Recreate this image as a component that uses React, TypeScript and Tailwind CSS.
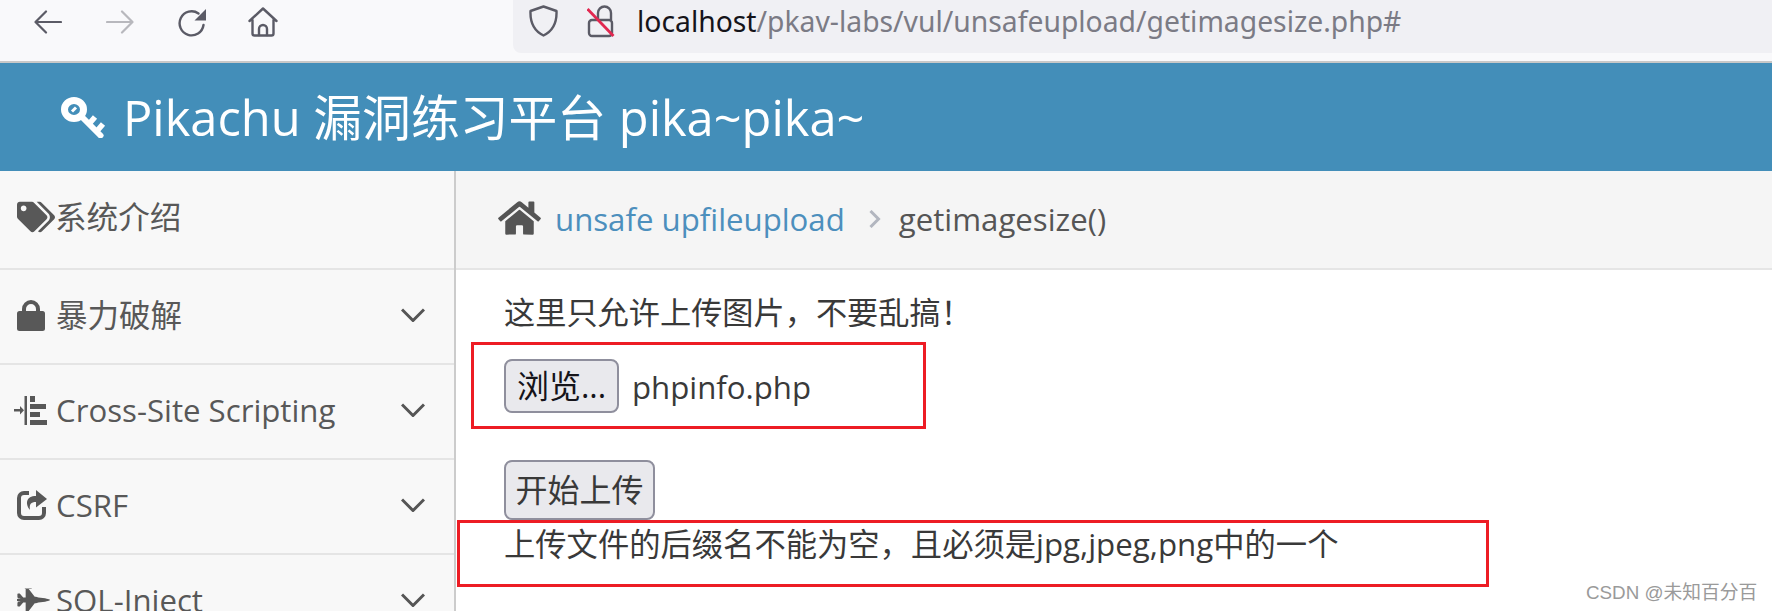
import { FaFighterJet, FaHome, FaTags } from "react-icons/fa";

const SANS = "font-['Open_Sans','Noto_Sans_CJK_SC',sans-serif]";
const BROWSER_GRAY = "#5b5b66";

function BackArrow({ color }: { color: string }) {
  return (
    <svg viewBox="0 0 28 24" className="w-[28px] h-[24px] shrink-0" fill="none" stroke={color} strokeWidth="2.2" strokeLinecap="round" strokeLinejoin="round">
      <path d="M27 12H2M12 1.5L1.5 12 12 22.5" />
    </svg>
  );
}

function ReloadIcon() {
  return (
    <svg viewBox="0 0 28 28" className="w-[28px] h-[28px] shrink-0" fill="none">
      <path d="M20.5 4.5A12 12 0 1 0 25.5 16" stroke={BROWSER_GRAY} strokeWidth="2.4" strokeLinecap="round" />
      <path d="M28 0v11.5H16.5z" fill={BROWSER_GRAY} />
    </svg>
  );
}

function HomeOutline() {
  return (
    <svg viewBox="0 0 30 30" className="w-[30px] h-[30px] shrink-0" fill="none" stroke={BROWSER_GRAY} strokeWidth="2.4" strokeLinejoin="round" strokeLinecap="round">
      <path d="M1.5 14L15 1.5 28.500 14M4.500 13v13.500a2 2 0 0 0 2 2h17a2 2 0 0 0 2-2V13" />
      <path d="M11 28v-6a4 4 0 0 1 8 0v6" />
    </svg>
  );
}

function ShieldIcon() {
  return (
    <svg viewBox="0 0 29 32" className="w-[29px] h-[32px] shrink-0" fill="none" stroke={BROWSER_GRAY} strokeWidth="2.4" strokeLinejoin="round">
      <path d="M14.500 1.500L27.500 6C28 18 24 26 14.500 30.500 5 26 1 18 1.500 6z" />
    </svg>
  );
}

function LockSlash() {
  return (
    <svg viewBox="0 0 28 33" className="w-[28px] h-[33px] shrink-0" fill="none" strokeWidth="2.4">
      <path d="M11 15V8a6.500 6.500 0 0 1 13 0v7" stroke={BROWSER_GRAY} />
      <rect x="2" y="15" width="23" height="16" rx="3" stroke={BROWSER_GRAY} />
      <path d="M0.500 4l26 27" stroke="#e22850" strokeWidth="2.800" />
    </svg>
  );
}

function KeyIcon() {
  return (
    <svg viewBox="0 0 46 41" className="w-[46px] h-[41px] shrink-0" fill="none" stroke="#fff">
      <ellipse cx="14" cy="12.500" rx="9.500" ry="9" strokeWidth="7" />
      <path d="M12 14.500l4-4" strokeWidth="3" stroke="#fff" />
      <path d="M21 19l19.500 19.500" strokeWidth="6" strokeLinecap="round" />
      <path d="M29 27l6-7M37 34l6-7" strokeWidth="5.500" />
    </svg>
  );
}

function LockIcon() {
  return (
    <svg viewBox="0 0 28 31" className="w-[28px] h-[31px] shrink-0" fill="#585858">
      <rect x="0" y="11" width="28" height="20" rx="2.500" />
      <path d="M7 12V9a7 7 0 0 1 14 0v3" fill="none" stroke="#585858" strokeWidth="4" />
    </svg>
  );
}

function IndentIcon() {
  return (
    <svg viewBox="0 0 33 29" className="w-[33px] h-[29px] shrink-0 ml-[-3px]" fill="#585858">
      <rect x="0" y="13" width="7" height="2.500" />
      <path d="M6 10l4 4.250-4 4.250z" />
      <rect x="10.500" y="0" width="2.500" height="29" />
      <rect x="16" y="0" width="5" height="6" />
      <rect x="16" y="8" width="16" height="5" />
      <rect x="16" y="16" width="10" height="5" />
      <rect x="16" y="24" width="17" height="5" />
    </svg>
  );
}

function ShareIcon() {
  return (
    <svg viewBox="0 0 30 30" className="w-[30px] h-[30px] shrink-0" fill="#585858">
      <path d="M12 3H7a5 5 0 0 0-5 5v15a5 5 0 0 0 5 5h15a5 5 0 0 0 5-5v-6" fill="none" stroke="#585858" strokeWidth="4" />
      <path d="M19 0l11 9-11 8.500V12c-5 0-7 2-6 8-5-6-4-14 6-14z" />
    </svg>
  );
}

function ChevronDown() {
  return (
    <svg viewBox="0 0 24 14" className="w-[24px] h-[14px] shrink-0" fill="none" stroke="#555" strokeWidth="3">
      <path d="M1 1.500l11 11 11-11" />
    </svg>
  );
}

const NAV = [
  { label: "暴力破解", size: "text-[31.5px]", icon: <LockIcon /> },
  { label: "Cross-Site Scripting", size: "text-[31.2px]", icon: <IndentIcon /> },
  { label: "CSRF", size: "text-[31.2px]", icon: <ShareIcon /> },
  { label: "SQL-Inject", size: "text-[31.2px]", icon: <FaFighterJet className="w-[33px] h-[30px] shrink-0" /> },
];

export default function App() {
  return (
    <div className={`relative h-[611px] overflow-hidden bg-white ${SANS}`}>
      {/* browser toolbar */}
      <div className="flex h-[63px] bg-[#f9f9fb] border-b-2 border-[#c8c8c8]">
        <div className="flex items-start w-[513px] pl-[34px]">
          <div className="mt-[10px]"><BackArrow color={BROWSER_GRAY} /></div>
          <div className="mt-[10px] ml-[44px] scale-x-[-1]"><BackArrow color="#b8b8bd" /></div>
          <div className="mt-[9px] ml-[44px]"><ReloadIcon /></div>
          <div className="mt-[7px] ml-[42px]"><HomeOutline /></div>
        </div>
        <div className="flex-1 h-[53px] bg-[#f0f0f4] rounded-bl-lg flex items-start pt-[5px] pl-[16px]">
          <ShieldIcon />
          <div className="ml-[29px]">
            <LockSlash />
          </div>
          <div className="ml-[22px] mt-[-2px] text-[28.3px] leading-[36px] text-[#7b7b85] font-['Noto_Sans',sans-serif] whitespace-nowrap">
            <span className="text-[#15141a]">localhost</span>/pkav-labs/vul/unsafeupload/getimagesize.php#
          </div>
        </div>
      </div>

      {/* app header */}
      <div className="flex items-center h-[108px] bg-[#438eb9] text-white pl-[60px]">
        <KeyIcon />
        <span className="ml-[17px] text-[48.8px] leading-none whitespace-nowrap">Pikachu 漏洞练习平台 pika~pika~</span>
      </div>

      <div className="flex">
        {/* sidebar */}
        <div className="w-[456px] shrink-0 bg-[#f8f8f8] border-r-2 border-[#cccccc] text-[#585858] h-[440px]">
          <div className="flex items-center h-[99px] pl-[17px] pb-[6px] border-b-2 border-[#e5e5e5]">
            <FaTags className="w-[38px] h-[32px] shrink-0" />
            <span className="text-[31.6px] leading-[44px]">系统介绍</span>
          </div>
          {NAV.map((item) => (
            <div key={item.label} className="flex items-center h-[95px] pl-[17px] pr-[29px] pb-[3px] border-b-2 border-[#e5e5e5]">
              <div className="w-[39px] shrink-0 flex items-center">{item.icon}</div>
              <span className={`flex-1 leading-[44px] whitespace-nowrap ${item.size}`}>{item.label}</span>
              <ChevronDown />
            </div>
          ))}
        </div>

        {/* content */}
        <div className="flex-1">
          <div className="flex items-center h-[99px] pl-[42px] pb-[1px] bg-[#f5f5f5] border-b-2 border-[#e5e5e5]">
            <FaHome className="w-[43px] h-[38px] mb-[2px] text-[#555555]" />
            <a href="#" className="ml-[14px] text-[31.2px] text-[#4c8fbd] whitespace-nowrap">unsafe upfileupload</a>
            <svg viewBox="0 0 12 18" className="ml-[24px] w-[12px] h-[18px]" fill="none" stroke="#b2b6bf" strokeWidth="3">
              <path d="M1.500 1l8 8-8 8" />
            </svg>
            <span className="ml-[18px] text-[31.2px] text-[#555555] whitespace-nowrap">getimagesize()</span>
          </div>
          <div className="pl-[48px] text-[#393939]">
            <p className="mt-[21px] text-[31.2px] leading-[42px] whitespace-nowrap">这里只允许上传图片，不要乱搞！</p>
            <div className="flex items-center mt-[26px]">
              <button className="h-[54px] w-[115px] rounded-[8px] bg-[#e9e9ed] border-2 border-[#8f8f9d] text-[32px] leading-none text-[#15141a]">浏览...</button>
              <span className="ml-[13px] mt-[2px] text-[31.2px]">phpinfo.php</span>
            </div>
            <button className="block mt-[47px] h-[60px] w-[151px] rounded-[8px] bg-[#e9e9ed] border-2 border-[#8f8f9d] text-[32px] leading-none text-[#393939]">开始上传</button>
            <p className="mt-[3px] text-[31.3px] leading-[42px] whitespace-nowrap">上传文件的后缀名不能为空，且必须是jpg,jpeg,png中的一个</p>
          </div>
        </div>
      </div>

      {/* red annotation boxes drawn over the screenshot */}
      <div className="absolute left-[471px] top-[342px] w-[455px] h-[87px] border-[3px] border-[#ed1c24]" />
      <div className="absolute left-[457px] top-[520px] w-[1032px] h-[67px] border-[3px] border-[#ed1c24]" />

      <div className="absolute left-[1586px] top-[581px] text-[18.800px] leading-[24px] text-[#9a9a9a] font-['Liberation_Sans','Noto_Sans_CJK_SC',sans-serif] whitespace-nowrap">
        CSDN @未知百分百
      </div>
    </div>
  );
}
